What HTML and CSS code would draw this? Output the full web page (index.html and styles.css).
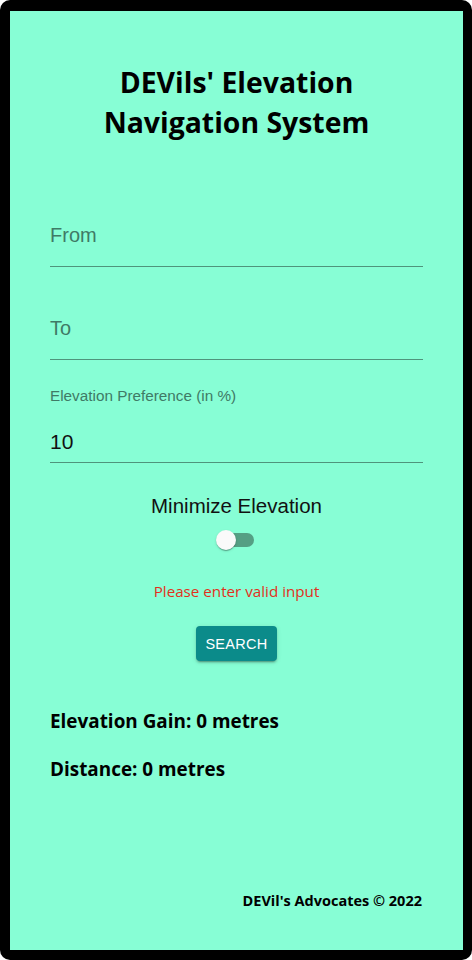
FILE: index.html
```html
<!DOCTYPE html>
<html lang="en">
<head>
<meta charset="utf-8">
<title>DEVils' Elevation Navigation System</title>
<link rel="stylesheet" href="styles.css">
</head>
<body>
<div class="frame">
  <main class="app">
    <h1 class="title">DEVils' Elevation<br>Navigation System</h1>
    <div class="field field-from">
      <div class="placeholder">From</div>
    </div>
    <div class="field field-to">
      <div class="placeholder">To</div>
    </div>
    <div class="field field-pref">
      <div class="small-label">Elevation Preference (in %)</div>
      <div class="value">10</div>
    </div>
    <div class="toggle-title">Minimize Elevation</div>
    <div class="switch">
      <div class="track"></div>
      <div class="thumb"></div>
    </div>
    <div class="error">Please enter valid input</div>
    <button class="search">SEARCH</button>
    <div class="result result-gain">Elevation Gain: 0 metres</div>
    <div class="result result-dist">Distance: 0 metres</div>
    <footer class="footer">DEVil's Advocates © 2022</footer>
  </main>
</div>
</body>
</html>
```
FILE: styles.css
```css
html, body {
  margin: 0;
  padding: 0;
  background: #ffffff;
}
.frame {
  box-sizing: border-box;
  width: 472px;
  height: 960px;
  background: #000;
  border-radius: 10px;
  padding: 11px 9px 10px 10px;
}
.app {
  box-sizing: border-box;
  height: 100%;
  background: #87fed5;
  padding: 0 40px 39px 40px;
  display: flex;
  flex-direction: column;
  font-family: "Open Sans", "Noto Sans", sans-serif;
  color: #000;
}
.title {
  margin: 51px 0 0 0;
  font-size: 28.4px;
  line-height: 40px;
  font-weight: 700;
  text-align: center;
}
.field {
  border-bottom: 1px solid #4f947c;
  font-family: "Liberation Sans", Arial, sans-serif;
}
.field-from {
  margin-top: 81px;
  padding-bottom: 19px;
}
.field-to {
  margin-top: 49px;
  padding-bottom: 19px;
}
.field-pref {
  margin-top: 27px;
  padding-bottom: 8px;
}
.placeholder {
  font-size: 20px;
  line-height: 24px;
  color: #3f7a66;
}
.small-label {
  font-size: 15.3px;
  line-height: 18px;
  color: #3f7a66;
}
.value {
  margin-top: 25px;
  font-size: 21px;
  line-height: 24px;
  color: #111;
}
.toggle-title {
  margin-top: 31px;
  font-family: "Liberation Sans", Arial, sans-serif;
  font-size: 20.5px;
  line-height: 24px;
  text-align: center;
  color: #111;
}
.switch {
  position: relative;
  align-self: center;
  width: 38px;
  height: 20px;
  margin-top: 12px;
  margin-right: 3px;
}
.track {
  margin: 3px 0 0 1px;
  width: 37px;
  height: 14px;
  border-radius: 7px;
  background: #559f84;
}
.thumb {
  position: absolute;
  left: 0;
  top: 0;
  width: 20px;
  height: 20px;
  border-radius: 50%;
  background: #fafafa;
  box-shadow: 0 2px 1px -1px rgba(0,0,0,0.2), 0 1px 1px 0 rgba(0,0,0,0.14), 0 1px 3px 0 rgba(0,0,0,0.12);
}
.error {
  margin-top: 31px;
  font-size: 15.2px;
  line-height: 20px;
  text-align: center;
  color: #e2301c;
}
.search {
  align-self: center;
  margin-top: 25px;
  width: 81px;
  height: 35px;
  border: none;
  border-radius: 4px;
  background: #0b8b8a;
  color: #fff;
  font-family: "Liberation Sans", Arial, sans-serif;
  font-size: 14.5px;
  font-weight: 500;
  letter-spacing: 0.3px;
  padding: 0;
  box-shadow: 0 3px 1px -2px rgba(0,0,0,0.2), 0 2px 2px 0 rgba(0,0,0,0.14), 0 1px 5px 0 rgba(0,0,0,0.12);
}
.result {
  font-size: 18.9px;
  line-height: 26px;
  font-weight: 700;
}
.result-gain {
  margin-top: 47px;
}
.result-dist {
  margin-top: 22px;
}
.footer {
  margin-top: auto;
  text-align: right;
  font-size: 14.5px;
  line-height: 20px;
  font-weight: 700;
  padding-right: 1px;
}
```
